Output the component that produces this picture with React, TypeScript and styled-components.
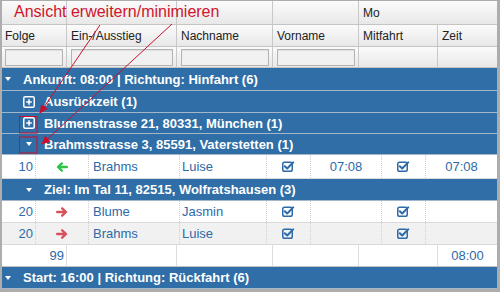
import styled, { createGlobalStyle } from "styled-components";

const GlobalStyle = createGlobalStyle`
  body {
    margin: 0;
    font-family: "Liberation Sans", Arial, sans-serif;
    background: #fff;
  }
`;

const HEAD_COLS = "65px 110px 96px 86px 79px 1fr";
const DATA_COLS = "34px 53px 91px 87px 44px 71px 44px 1fr";

const Frame = styled.div`
  position: relative;
  width: 500px;
  height: 292px;
  box-sizing: border-box;
  border-style: solid;
  border-color: #adadad;
  border-width: 1px 3px 3px 2px;
  background: #fff;
  overflow: hidden;
`;

const HeadRow = styled.div<{ $h: number }>`
  display: grid;
  grid-template-columns: ${HEAD_COLS};
  height: ${(p) => p.$h}px;
  box-sizing: border-box;
  border-bottom: 1px solid #c4c4c4;
  background: linear-gradient(#fbfbfb, #e8e8e8);
`;

const HeadCell = styled.div<{ $span?: number }>`
  grid-column: span ${(p) => p.$span || 1};
  display: flex;
  align-items: center;
  padding-left: 4px;
  border-right: 1px solid #c8c8c8;
  font-size: 12px;
  color: #222;
  &:first-child {
    padding-left: 3px;
  }
  &:last-child {
    border-right: none;
  }
`;

const FilterCell = styled.div`
  display: flex;
  align-items: center;
  padding: 0 3px 0 4px;
  border-right: 1px solid #c8c8c8;
  &:first-child {
    padding-left: 3px;
  }
  &:last-child {
    border-right: none;
  }
`;

const FilterInput = styled.div`
  flex: 1;
  height: 17px;
  box-sizing: border-box;
  border: 1px solid #b3b3b3;
  background: #f1f1f1;
  box-shadow: inset 0 1px 1px rgba(0, 0, 0, 0.08);
`;

const GroupRow = styled.div<{ $level: number; $h: number }>`
  display: flex;
  align-items: center;
  gap: 9px;
  height: ${(p) => p.$h}px;
  box-sizing: border-box;
  padding-left: ${(p) => (p.$level ? 21 : 0)}px;
  background: #2f6ea6;
  border-bottom: 1px solid #a3b6ca;
  color: #fff;
  font-weight: 700;
  font-size: 13px;
  white-space: nowrap;
`;

const IconSlot = styled.span`
  width: 12px;
  height: 12px;
  display: flex;
  align-items: center;
  justify-content: center;
`;

const Caret = styled.span`
  width: 0;
  height: 0;
  border-left: 3.5px solid transparent;
  border-right: 3.5px solid transparent;
  border-top: 4px solid #fff;
`;

const DataRow = styled.div<{ $alt?: boolean; $h: number }>`
  display: grid;
  grid-template-columns: ${DATA_COLS};
  height: ${(p) => p.$h}px;
  box-sizing: border-box;
  border-bottom: 1px solid #dadada;
  background: ${(p) => (p.$alt ? "#f1f1f1" : "#fff")};
  color: #2d6aa8;
  font-size: 13px;
`;

const SumRow = styled(DataRow)`
  grid-template-columns: ${HEAD_COLS};
  border-bottom-color: #c4c4c4;
`;

const Cell = styled.div<{ $align?: "left" | "center" | "right"; $pad?: number; $solid?: boolean }>`
  display: flex;
  align-items: center;
  justify-content: ${(p) =>
    p.$align === "center" ? "center" : p.$align === "right" ? "flex-end" : "flex-start"};
  padding: 0 ${(p) => (p.$align === "right" ? p.$pad ?? 2 : 0)}px 0
    ${(p) => (p.$align === "left" || !p.$align ? p.$pad ?? 4 : 0)}px;
  border-right: 1px ${(p) => (p.$solid ? "solid #dedede" : "dotted #cfcfcf")};
  &:last-child {
    border-right: none;
  }
`;

const Note = styled.span`
  position: absolute;
  left: 12px;
  top: 2px;
  font-size: 16px;
  color: #d0142c;
  white-space: nowrap;
  pointer-events: none;
`;

const Overlay = styled.svg`
  position: absolute;
  left: -2px;
  top: -1px;
  width: 500px;
  height: 292px;
  pointer-events: none;
`;

const PlusBox = () => (
  <svg width="12" height="12" viewBox="0 0 12 12">
    <rect x="0.75" y="0.75" width="10.5" height="10.5" rx="1.5" fill="none" stroke="#fff" strokeWidth="1.5" />
    <path d="M6 3.2v5.6M3.2 6h5.6" stroke="#fff" strokeWidth="1.6" />
  </svg>
);

const Arrow = ({ dir }: { dir: "left" | "right" }) => (
  <svg width="12" height="10" viewBox="0 0 12 10">
    <g transform={dir === "right" ? "translate(12 0) scale(-1 1)" : undefined}>
      <path
        d="M10.8 5H2.2M5.8 1.4L2 5l3.8 3.6"
        fill="none"
        stroke={dir === "left" ? "#2fc44a" : "#d9505a"}
        strokeWidth="2.4"
        strokeLinecap="round"
        strokeLinejoin="round"
      />
    </g>
  </svg>
);

const Check = () => (
  <svg width="13" height="11" viewBox="0 0 13 11">
    <rect x="0.75" y="1.25" width="9.5" height="9" rx="1.8" fill="none" stroke="#2d6aa8" strokeWidth="1.5" />
    <path d="M2.8 5.2L5.2 7.5L11.2 1.4" fill="none" stroke="#2d6aa8" strokeWidth="2" strokeLinecap="round" strokeLinejoin="round" />
  </svg>
);

type Group = { level: number; icon: "plus" | "caret"; text: string; h: number };

const Group = ({ level, icon, text, h }: Group) => (
  <GroupRow $level={level} $h={h}>
    <IconSlot>{icon === "plus" ? <PlusBox /> : <Caret />}</IconSlot>
    <span>{text}</span>
  </GroupRow>
);

const passengers = [
  { folge: "20", nach: "Blume", vor: "Jasmin", alt: false },
  { folge: "20", nach: "Brahms", vor: "Luise", alt: true },
];

export default function App() {
  return (
    <>
      <GlobalStyle />
      <Frame>
        <HeadRow $h={24}>
          <HeadCell />
          <HeadCell />
          <HeadCell />
          <HeadCell />
          <HeadCell $span={2}>Mo</HeadCell>
        </HeadRow>
        <HeadRow $h={22}>
          <HeadCell>Folge</HeadCell>
          <HeadCell>Ein-/Ausstieg</HeadCell>
          <HeadCell>Nachname</HeadCell>
          <HeadCell>Vorname</HeadCell>
          <HeadCell>Mitfahrt</HeadCell>
          <HeadCell>Zeit</HeadCell>
        </HeadRow>
        <HeadRow $h={21}>
          <FilterCell><FilterInput /></FilterCell>
          <FilterCell><FilterInput /></FilterCell>
          <FilterCell><FilterInput /></FilterCell>
          <FilterCell><FilterInput /></FilterCell>
          <FilterCell />
          <FilterCell />
        </HeadRow>

        <Group level={0} icon="caret" text="Ankunft: 08:00 | Richtung: Hinfahrt (6)" h={23} />
        <Group level={1} icon="plus" text="Ausrückzeit (1)" h={22} />
        <Group level={1} icon="plus" text="Blumenstrasse 21, 80331, München (1)" h={21} />
        <Group level={1} icon="caret" text="Brahmsstrasse 3, 85591, Vaterstetten (1)" h={21} />

        <DataRow $h={24}>
          <Cell $align="right">10</Cell>
          <Cell $align="center"><Arrow dir="left" /></Cell>
          <Cell $pad={4}>Brahms</Cell>
          <Cell $pad={2}>Luise</Cell>
          <Cell $align="center"><Check /></Cell>
          <Cell $align="center">07:08</Cell>
          <Cell $align="center"><Check /></Cell>
          <Cell $align="center">07:08</Cell>
        </DataRow>

        <Group level={1} icon="caret" text="Ziel: Im Tal 11, 82515, Wolfratshausen (3)" h={22} />

        {passengers.map((p, i) => (
          <DataRow key={i} $h={22} $alt={p.alt}>
            <Cell $align="right">{p.folge}</Cell>
            <Cell $align="center"><Arrow dir="right" /></Cell>
            <Cell $pad={4}>{p.nach}</Cell>
            <Cell $pad={2}>{p.vor}</Cell>
            <Cell $align="center"><Check /></Cell>
            <Cell />
            <Cell $align="center"><Check /></Cell>
            <Cell />
          </DataRow>
        ))}

        <SumRow $h={22}>
          <Cell $align="right" $solid>99</Cell>
          <Cell $solid />
          <Cell $solid />
          <Cell $solid />
          <Cell $solid />
          <Cell $align="center">08:00</Cell>
        </SumRow>

        <Group level={0} icon="caret" text="Start: 16:00 | Richtung: Rückfahrt (6)" h={22} />

        <Note>Ansicht erweitern/minimieren</Note>
        <Overlay viewBox="0 0 500 292">
          <defs>
            <marker id="head" markerWidth="9" markerHeight="8" refX="8" refY="4" orient="auto" markerUnits="userSpaceOnUse">
              <path d="M0 0L9 4L0 8z" fill="#c8102e" />
            </marker>
          </defs>
          <line x1="100" y1="25" x2="40" y2="113" stroke="#c8102e" strokeWidth="1" markerEnd="url(#head)" />
          <line x1="172" y1="24" x2="42" y2="144" stroke="#c8102e" strokeWidth="1" markerEnd="url(#head)" />
          <rect x="19.5" y="116.5" width="17.5" height="16.5" fill="none" stroke="#c8102e" strokeWidth="1" />
          <rect x="19.5" y="137" width="17.5" height="16" fill="none" stroke="#c8102e" strokeWidth="1" />
        </Overlay>
      </Frame>
    </>
  );
}
